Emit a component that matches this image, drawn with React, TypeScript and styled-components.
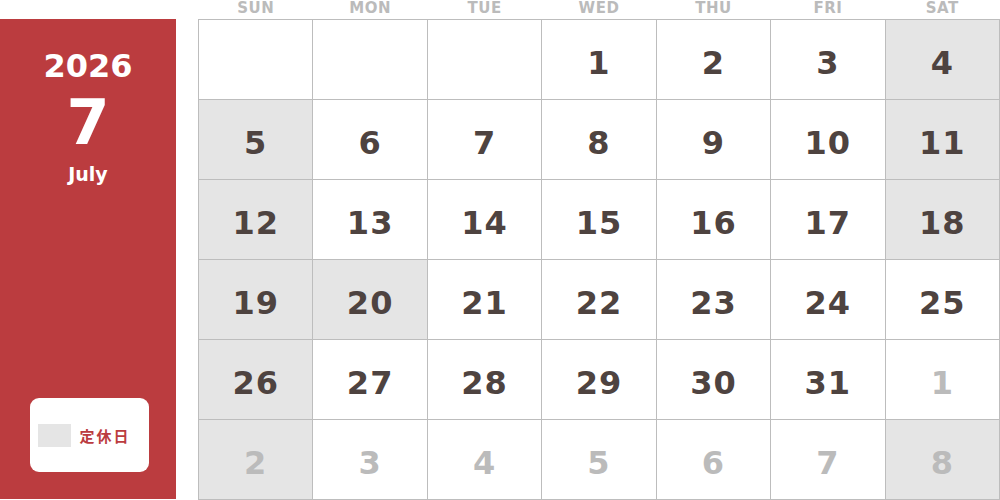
import styled, { createGlobalStyle } from 'styled-components';

const GlobalStyle = createGlobalStyle`
  html, body {
    margin: 0;
    padding: 0;
    background: #fff;
  }
  body {
    font-family: 'DejaVu Sans', Verdana, sans-serif;
  }
`;

const Page = styled.div`
  width: 1000px;
  height: 500px;
  display: flex;
  gap: 22px;
  overflow: hidden;
`;

const Side = styled.div`
  width: 176px;
  height: 480px;
  margin-top: 19px;
  background: #bb3c3f;
  display: flex;
  flex-direction: column;
  align-items: center;
  color: #fff;
  font-weight: 700;
`;

const Year = styled.div`
  margin-top: 27px;
  font-size: 32px;
  line-height: 40px;
`;

const Month = styled.div`
  margin-top: 5px;
  font-size: 62px;
  line-height: 64px;
`;

const MonthName = styled.div`
  margin-top: 7px;
  font-size: 19px;
  line-height: 24px;
`;

const Legend = styled.div`
  margin-top: auto;
  margin-bottom: 27px;
  margin-left: 2px;
  width: 119px;
  height: 74px;
  box-sizing: border-box;
  background: #fff;
  border-radius: 9px;
  display: flex;
  align-items: center;
  padding-left: 8px;
  gap: 9px;
`;

const Swatch = styled.span`
  width: 33px;
  height: 23px;
  background: #e5e5e5;
`;

const LegendLabel = styled.span`
  color: #bb3c3f;
  font-family: 'Noto Sans CJK JP', sans-serif;
  font-weight: 700;
  font-size: 15px;
  letter-spacing: 2px;
`;

const Calendar = styled.div`
  width: 802px;
  display: flex;
  flex-direction: column;
`;

const WeekHead = styled.div`
  height: 19px;
  display: grid;
  grid-template-columns: repeat(7, 1fr);
  padding: 0 1px;
  gap: 1px;
`;

const DayName = styled.div`
  text-align: center;
  color: #bbbbbb;
  font-weight: 700;
  font-size: 15px;
  line-height: 17px;
  letter-spacing: 0.5px;
`;

const Grid = styled.div`
  background: #bdbdbd;
  padding: 1px;
  display: grid;
  grid-template-columns: repeat(7, 1fr);
  grid-auto-rows: 79px;
  gap: 1px;
`;

const Cell = styled.div<{ $off: boolean; $muted: boolean }>`
  background: ${(p) => (p.$off ? '#e5e5e5' : '#fff')};
  color: ${(p) => (p.$muted ? '#bbbbbb' : '#4e4340')};
  display: flex;
  align-items: center;
  justify-content: center;
  padding-top: 6px;
  box-sizing: border-box;
  font-weight: 700;
  font-size: 32px;
  letter-spacing: 1px;
`;

type Day = { n: string; off?: boolean; muted?: boolean };

const days: Day[] = [
  { n: '' }, { n: '' }, { n: '' }, { n: '1' }, { n: '2' }, { n: '3' }, { n: '4', off: true },
  { n: '5', off: true }, { n: '6' }, { n: '7' }, { n: '8' }, { n: '9' }, { n: '10' }, { n: '11', off: true },
  { n: '12', off: true }, { n: '13' }, { n: '14' }, { n: '15' }, { n: '16' }, { n: '17' }, { n: '18', off: true },
  { n: '19', off: true }, { n: '20', off: true }, { n: '21' }, { n: '22' }, { n: '23' }, { n: '24' }, { n: '25' },
  { n: '26', off: true }, { n: '27' }, { n: '28' }, { n: '29' }, { n: '30' }, { n: '31' }, { n: '1', muted: true },
  { n: '2', off: true, muted: true }, { n: '3', muted: true }, { n: '4', muted: true }, { n: '5', muted: true },
  { n: '6', muted: true }, { n: '7', muted: true }, { n: '8', off: true, muted: true },
];

const weekdays = ['SUN', 'MON', 'TUE', 'WED', 'THU', 'FRI', 'SAT'];

export default function App() {
  return (
    <>
      <GlobalStyle />
      <Page>
        <Side>
          <Year>2026</Year>
          <Month>7</Month>
          <MonthName>July</MonthName>
          <Legend>
            <Swatch />
            <LegendLabel>定休日</LegendLabel>
          </Legend>
        </Side>
        <Calendar>
          <WeekHead>
            {weekdays.map((w) => (
              <DayName key={w}>{w}</DayName>
            ))}
          </WeekHead>
          <Grid>
            {days.map((d, i) => (
              <Cell key={i} $off={!!d.off} $muted={!!d.muted}>
                {d.n}
              </Cell>
            ))}
          </Grid>
        </Calendar>
      </Page>
    </>
  );
}
